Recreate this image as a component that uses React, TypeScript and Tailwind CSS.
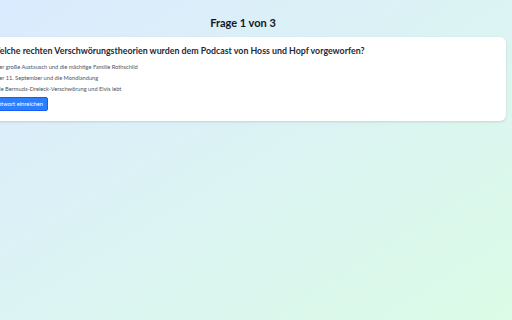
import React, { useState } from 'react';

const options = [
  'Der große Austausch und die mächtige Familie Rothschild',
  'Der 11. September und die Mondlandung',
  'Die Bermuda-Dreieck-Verschwörung und Elvis lebt',
];

export default function App() {
  const [selected, setSelected] = useState<number | null>(null);

  return (
    <div
      className="min-h-screen w-full overflow-hidden bg-gradient-to-br from-blue-100 to-green-100 flex flex-col items-center pr-[26px] pt-[15px]"
      style={{ fontFamily: 'Lato, "Noto Sans", sans-serif' }}
    >
      <h1 className="text-[11px] leading-[16px] font-bold text-gray-900 mb-[6px]">Frage 1 von 3</h1>

      {/* Question card */}
      <div className="w-[526px] shrink-0 bg-white rounded-md shadow-sm px-[11px] pt-[7px] pb-[10px]">
        <h2 className="text-[8.8px] leading-[14px] font-bold text-gray-800 mb-[3px]">
          Welche rechten Verschwörungstheorien wurden dem Podcast von Hoss und Hopf vorgeworfen?
        </h2>
        <div className="flex flex-col">
          {options.map((option, i) => (
            <label
              key={option}
              onClick={() => setSelected(i)}
              className={`text-[5.7px] leading-[11px] cursor-pointer pl-[4px] ${
                selected === i ? 'text-blue-600' : 'text-gray-600'
              }`}
            >
              {option}
            </label>
          ))}
        </div>
        <button className="block -ml-[2px] mt-[3px] h-[14px] px-[4px] rounded-[2px] bg-blue-500 text-white text-[5.8px] leading-[12px] border border-blue-600">
          Antwort einreichen
        </button>
      </div>
    </div>
  );
}
